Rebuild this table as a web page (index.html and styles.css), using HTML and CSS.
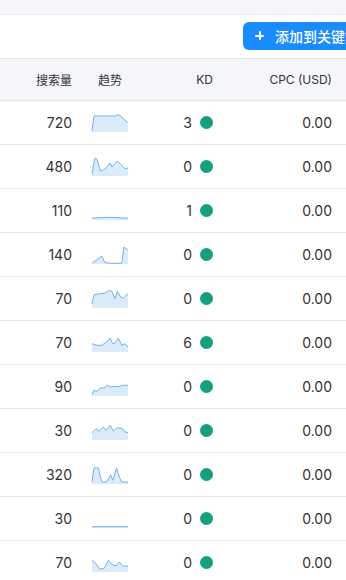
FILE: index.html
```html
<!DOCTYPE html>
<html lang="zh-CN">
<head>
<meta charset="utf-8">
<link rel="stylesheet" href="styles.css">
</head>
<body>
<div class="page">
  <div class="topband"></div>
  <div class="toolbar">
    <button class="add-btn"><span class="plus"></span><span class="btn-label">添加到关键词</span></button>
  </div>
  <div class="table">
    <div class="row head">
      <div class="c-vol">搜索量</div>
      <div class="c-trend">趋势</div>
      <div class="c-kd">KD</div>
      <div class="c-cpc">CPC (USD)</div>
    </div>

    <div class="row">
      <div class="c-vol">720</div>
      <div class="c-trend"><svg class="spark" viewBox="0 0 36 18"><path class="area" d="M0 17.3 L2 2 L23 2 L26.3 0.5 L29.7 3 L35.7 8.7 L36 18 L0 18 Z"/><path class="line" d="M0 17.3 L2 2 L23 2 L26.3 0.5 L29.7 3 L35.7 8.7"/></svg></div>
      <div class="c-kd">3<span class="dot"></span></div>
      <div class="c-cpc">0.00</div>
    </div>

    <div class="row">
      <div class="c-vol">480</div>
      <div class="c-trend"><svg class="spark" viewBox="0 0 36 18"><path class="area" d="M0 15.7 L2.7 0.5 L4.7 0.8 L8.7 13.3 L13.3 10.7 L18 5 L20 9 L25.3 3 L29.7 7.3 L33 10.7 L36 10 L36 18 L0 18 Z"/><path class="line" d="M0 15.7 L2.7 0.5 L4.7 0.8 L8.7 13.3 L13.3 10.7 L18 5 L20 9 L25.3 3 L29.7 7.3 L33 10.7 L36 10"/></svg></div>
      <div class="c-kd">0<span class="dot"></span></div>
      <div class="c-cpc">0.00</div>
    </div>

    <div class="row">
      <div class="c-vol">110</div>
      <div class="c-trend"><svg class="spark" viewBox="0 0 36 18"><path class="area" d="M0 16 L18 15.3 L36 16.2 L36 18 L0 18 Z"/><path class="line" d="M0 16 L18 15.3 L36 16.2"/></svg></div>
      <div class="c-kd">1<span class="dot"></span></div>
      <div class="c-cpc">0.00</div>
    </div>

    <div class="row">
      <div class="c-vol">140</div>
      <div class="c-trend"><svg class="spark" viewBox="0 0 36 18"><path class="area" d="M0 17.3 L9.7 10 L13 16.7 L19.7 17.3 L29.7 17.3 L32 1 L36 4.3 L36 18 L0 18 Z"/><path class="line" d="M0 17.3 L9.7 10 L13 16.7 L19.7 17.3 L29.7 17.3 L32 1 L36 4.3"/></svg></div>
      <div class="c-kd">0<span class="dot"></span></div>
      <div class="c-cpc">0.00</div>
    </div>

    <div class="row">
      <div class="c-vol">70</div>
      <div class="c-trend"><svg class="spark" viewBox="0 0 36 18"><path class="area" d="M0 13.7 L2 4.7 L8 3.7 L13 3 L17.3 0.5 L19.7 1.3 L23 8.7 L25.3 1.3 L28.7 7 L31.3 8 L36 3.7 L36 18 L0 18 Z"/><path class="line" d="M0 13.7 L2 4.7 L8 3.7 L13 3 L17.3 0.5 L19.7 1.3 L23 8.7 L25.3 1.3 L28.7 7 L31.3 8 L36 3.7"/></svg></div>
      <div class="c-kd">0<span class="dot"></span></div>
      <div class="c-cpc">0.00</div>
    </div>

    <div class="row">
      <div class="c-vol">70</div>
      <div class="c-trend"><svg class="spark" viewBox="0 0 36 18"><path class="area" d="M0 9.7 L4.7 11.3 L9.7 11.3 L14.7 8 L18 4 L20.7 9.7 L23 9 L26.3 4 L29.7 11.3 L33 9.7 L36 13 L36 18 L0 18 Z"/><path class="line" d="M0 9.7 L4.7 11.3 L9.7 11.3 L14.7 8 L18 4 L20.7 9.7 L23 9 L26.3 4 L29.7 11.3 L33 9.7 L36 13"/></svg></div>
      <div class="c-kd">6<span class="dot"></span></div>
      <div class="c-cpc">0.00</div>
    </div>

    <div class="row">
      <div class="c-vol">90</div>
      <div class="c-trend"><svg class="spark" viewBox="0 0 36 18"><path class="area" d="M0 16.7 L2 12.3 L5.3 13.3 L8.7 9.7 L12 10 L15.3 7.3 L18.7 9 L22 8.3 L27.3 8.7 L29.7 7.3 L36 7.3 L36 18 L0 18 Z"/><path class="line" d="M0 16.7 L2 12.3 L5.3 13.3 L8.7 9.7 L12 10 L15.3 7.3 L18.7 9 L22 8.3 L27.3 8.7 L29.7 7.3 L36 7.3"/></svg></div>
      <div class="c-kd">0<span class="dot"></span></div>
      <div class="c-cpc">0.00</div>
    </div>

    <div class="row">
      <div class="c-vol">30</div>
      <div class="c-trend"><svg class="spark" viewBox="0 0 36 18"><path class="area" d="M0 10.7 L4 6.7 L7.3 9.3 L11.3 5 L14 8.3 L18 3.3 L21.3 9 L24.7 6 L29.7 6 L33 10 L36 10.7 L36 18 L0 18 Z"/><path class="line" d="M0 10.7 L4 6.7 L7.3 9.3 L11.3 5 L14 8.3 L18 3.3 L21.3 9 L24.7 6 L29.7 6 L33 10 L36 10.7"/></svg></div>
      <div class="c-kd">0<span class="dot"></span></div>
      <div class="c-cpc">0.00</div>
    </div>

    <div class="row">
      <div class="c-vol">320</div>
      <div class="c-trend"><svg class="spark" viewBox="0 0 36 18"><path class="area" d="M0 16 L2 2 L6.3 2 L9.7 16 L14.7 16 L18.7 8.7 L20.7 14.3 L24.7 2 L27.3 11 L29.7 16 L36 16 L36 18 L0 18 Z"/><path class="line" d="M0 16 L2 2 L6.3 2 L9.7 16 L14.7 16 L18.7 8.7 L20.7 14.3 L24.7 2 L27.3 11 L29.7 16 L36 16"/></svg></div>
      <div class="c-kd">0<span class="dot"></span></div>
      <div class="c-cpc">0.00</div>
    </div>

    <div class="row">
      <div class="c-vol">30</div>
      <div class="c-trend"><svg class="spark" viewBox="0 0 36 18"><path class="area" d="M0 16.7 L36 16.7 L36 18 L0 18 Z"/><path class="line" d="M0 16.7 L36 16.7"/></svg></div>
      <div class="c-kd">0<span class="dot"></span></div>
      <div class="c-cpc">0.00</div>
    </div>

    <div class="row">
      <div class="c-vol">70</div>
      <div class="c-trend"><svg class="spark" viewBox="0 0 36 18"><path class="area" d="M0 6.3 L4 9.7 L7.3 14.7 L12 14.7 L16.3 6.3 L20.7 10.7 L24 12 L27.3 8 L30.7 12 L36 12 L36 18 L0 18 Z"/><path class="line" d="M0 6.3 L4 9.7 L7.3 14.7 L12 14.7 L16.3 6.3 L20.7 10.7 L24 12 L27.3 8 L30.7 12 L36 12"/></svg></div>
      <div class="c-kd">0<span class="dot"></span></div>
      <div class="c-cpc">0.00</div>
    </div>
  </div>
</div>
</body>
</html>
```

FILE: styles.css
```css
* { box-sizing: border-box; }

html, body {
  margin: 0;
  padding: 0;
  background: #ffffff;
}

body {
  font-family: Inter, "Noto Sans CJK SC", sans-serif;
  color: #333333;
}

.page {
  width: 346px;
  overflow: hidden;
}

.topband {
  height: 15px;
  background: #f5f6fa;
  border-bottom: 1px solid #e6e8ee;
}

.toolbar {
  height: 44px;
  display: flex;
  align-items: center;
  padding-left: 243px;
  padding-bottom: 2px;
  border-bottom: 1px solid #e2e4ea;
  white-space: nowrap;
  overflow: hidden;
}

.add-btn {
  flex: none;
  display: flex;
  align-items: center;
  height: 28px;
  padding: 0 14px 0 12px;
  border: 0;
  border-radius: 6px;
  background: #1a8cff;
  color: #ffffff;
  font-family: "Noto Sans CJK SC", sans-serif;
  font-size: 14px;
  font-weight: 500;
}

.plus {
  position: relative;
  width: 9px;
  height: 9px;
  margin-right: 11px;
}

.plus::before,
.plus::after {
  content: "";
  position: absolute;
  background: #ffffff;
  border-radius: 1px;
}

.plus::before {
  left: 0;
  top: 3.5px;
  width: 9px;
  height: 2px;
}

.plus::after {
  left: 3.5px;
  top: 0;
  width: 2px;
  height: 9px;
}

.row {
  display: grid;
  grid-template-columns: 80px 60px 81px 1fr;
  align-items: center;
  height: 44px;
  border-bottom: 1px solid #e6e8ec;
  font-size: 14px;
}

.row.head {
  height: 42px;
  background: #f5f6fa;
  border-bottom: 1px solid #e2e4ea;
  font-size: 12px;
  color: #333333;
}

.c-vol {
  text-align: right;
  padding-right: 8px;
}

.c-trend {
  padding-left: 12px;
}

.head .c-trend {
  padding-left: 18px;
}

.c-kd {
  display: flex;
  align-items: center;
  justify-content: flex-end;
  padding-right: 8px;
}

.c-cpc {
  text-align: right;
  padding-right: 14px;
}

.dot {
  width: 13px;
  height: 13px;
  margin-left: 8px;
  border-radius: 50%;
  background: #14a07c;
}

.spark {
  display: block;
  width: 36px;
  height: 18px;
  overflow: visible;
}

.spark .area {
  fill: #dcebfa;
  stroke: none;
}

.spark .line {
  fill: none;
  stroke: #72b2ec;
  stroke-width: 1;
  stroke-linejoin: round;
}
```
